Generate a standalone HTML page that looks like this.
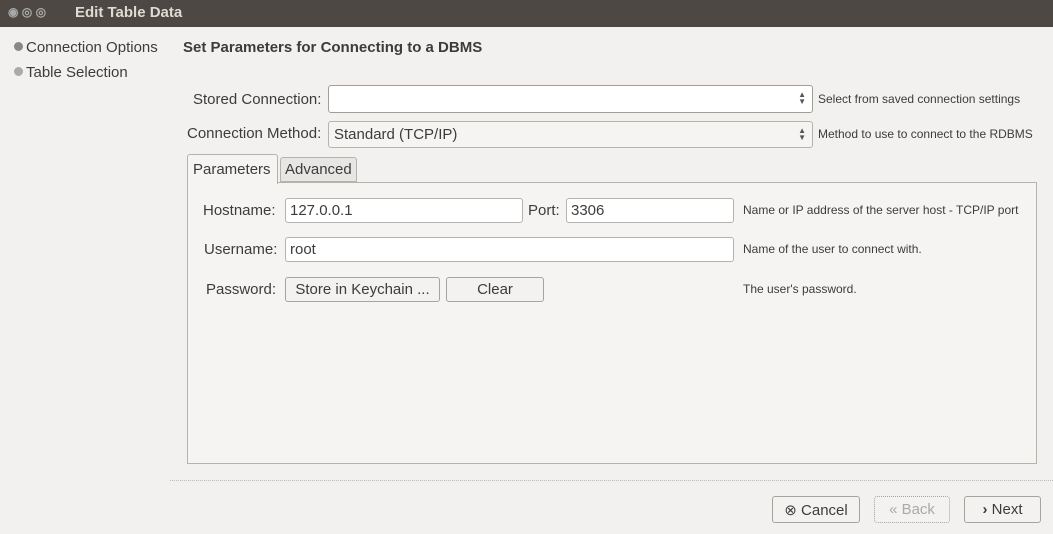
<!DOCTYPE html>
<html><head><style>
*{box-sizing:border-box;margin:0;padding:0}
body{width:1053px;height:534px;background:#f2f1f0;font-family:"Liberation Sans",sans-serif;font-size:15px;color:#3c3c3c;position:relative;overflow:hidden}
.a{position:absolute;white-space:nowrap}
.title{left:0;top:0;width:1053px;height:27px;background:#4d4843;color:#dfdbd2;font-weight:bold;font-size:15px}
.box{position:absolute;border:1px solid #b8b2ac;border-radius:3px;background:#fff}
.btn{position:absolute;border:1px solid #a9a39d;border-radius:3px;background:#f3f2f1;text-align:center;font-size:15px}
.sm{font-size:12px;color:#3c3c3c}
.arr{position:absolute;right:6px;top:5px;font-size:8px;line-height:7px;color:#555}
.dot{display:inline-block;width:9px;height:9px;border-radius:50%;vertical-align:1px;margin-right:3px}
</style></head><body>
<div class="a title"><span class="a" style="left:8px;top:5px;color:#aaa;font-size:12px">◉ ◎ ◎</span><span class="a" style="left:75px;top:4px">Edit Table Data</span></div>
<div class="a" style="left:14px;top:39px"><span class="dot" style="background:#888"></span>Connection Options</div>
<div class="a" style="left:14px;top:64px"><span class="dot" style="background:#aaa"></span>Table Selection</div>
<div class="a" style="left:183px;top:39px;font-weight:bold;font-size:15px">Set Parameters for Connecting to a DBMS</div>
<div class="a" style="left:193px;top:91px">Stored Connection:</div>
<div class="box" style="left:328px;top:85px;width:485px;height:28px;border-color:#a39d97"><div class="arr">▲<br>▼</div></div>
<div class="a sm" style="left:818px;top:92px">Select from saved connection settings</div>
<div class="a" style="left:187px;top:125px">Connection Method:</div>
<div class="box" style="left:328px;top:121px;width:485px;height:27px;background:#f5f4f3"><span class="a" style="left:5px;top:4px">Standard (TCP/IP)</span><div class="arr">▲<br>▼</div></div>
<div class="a sm" style="left:818px;top:127px">Method to use to connect to the RDBMS</div>
<div class="box" style="left:187px;top:182px;width:850px;height:282px;background:#f5f4f3;border-radius:0"></div>
<div class="box" style="left:187px;top:154px;width:91px;height:30px;background:#f5f4f3;border-bottom:none;border-radius:3px 3px 0 0"><span class="a" style="left:5px;top:6px">Parameters</span></div>
<div class="box" style="left:280px;top:157px;width:77px;height:25px;background:#e8e6e4;border-radius:3px 3px 0 0"><span class="a" style="left:4px;top:3px">Advanced</span></div>
<div class="a" style="left:203px;top:202px">Hostname:</div>
<div class="box" style="left:285px;top:198px;width:238px;height:25px"><span class="a" style="left:4px;top:3px">127.0.0.1</span></div>
<div class="a" style="left:528px;top:202px">Port:</div>
<div class="box" style="left:566px;top:198px;width:168px;height:25px"><span class="a" style="left:4px;top:3px">3306</span></div>
<div class="a sm" style="left:743px;top:203px">Name or IP address of the server host - TCP/IP port</div>
<div class="a" style="left:204px;top:241px">Username:</div>
<div class="box" style="left:285px;top:237px;width:449px;height:25px"><span class="a" style="left:4px;top:3px">root</span></div>
<div class="a sm" style="left:743px;top:242px">Name of the user to connect with.</div>
<div class="a" style="left:206px;top:281px">Password:</div>
<div class="btn" style="left:285px;top:277px;width:155px;height:25px;padding-top:3px">Store in Keychain ...</div>
<div class="btn" style="left:446px;top:277px;width:98px;height:25px;padding-top:3px">Clear</div>
<div class="a sm" style="left:743px;top:282px">The user's password.</div>
<div class="a" style="left:170px;top:480px;width:883px;border-top:1px dotted #bbb"></div>
<div class="btn" style="left:772px;top:496px;width:88px;height:27px;padding-top:4px"><span style="color:#444">⊗</span> Cancel</div>
<div class="btn" style="left:874px;top:496px;width:76px;height:27px;padding-top:4px;color:#aaa;border-style:dotted">« Back</div>
<div class="btn" style="left:964px;top:496px;width:77px;height:27px;padding-top:4px"><b>›</b> Next</div>
</body></html>
